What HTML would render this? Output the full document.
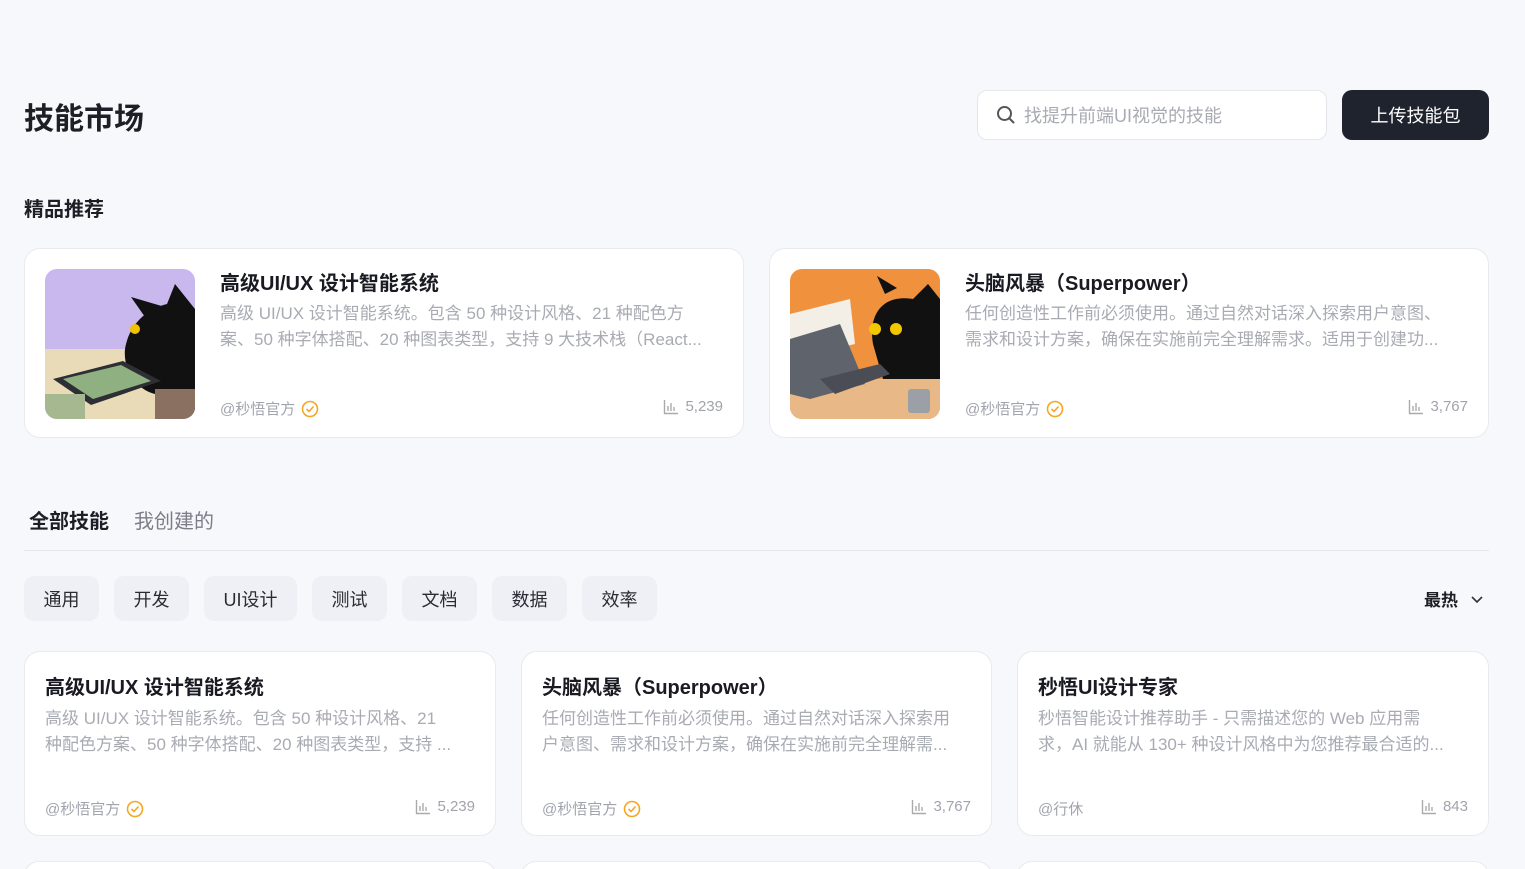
<!DOCTYPE html>
<html style="width:1525px;height:869px;overflow:hidden"><head><meta charset="utf-8"><style>
*{box-sizing:border-box;margin:0;padding:0}
body{width:1525px;height:869px;overflow:hidden;background:#f7f8fc;font-family:"Liberation Sans","Noto Sans CJK SC",sans-serif;position:relative;color:#1d1f26}
.a{position:absolute}
.card{position:absolute;background:#fff;border:1px solid #e9eaef;border-radius:16px}
.t{font-size:20px;font-weight:700;color:#1a1b22;white-space:nowrap}
.d{font-size:17px;color:#a9abb3;line-height:26px}
.m{font-size:15px;color:#a2a4ad;display:flex;align-items:center;gap:6px}
.chip{position:absolute;top:576px;height:45px;background:#eff0f5;border-radius:10px;font-size:18px;color:#2a2c33;display:flex;align-items:center;justify-content:center}
</style></head><body>
<div class="a" style="left:24px;top:94px;font-size:30px;font-weight:700">技能市场</div>
<div class="a" style="left:977px;top:90px;width:350px;height:50px;background:#fff;border:1px solid #e6e7ec;border-radius:10px;display:flex;align-items:center;padding-left:18px;gap:8px;font-size:18px;color:#a9abb2">
<svg width="20" height="20" viewBox="0 0 20 20"><circle cx="8.5" cy="8.5" r="6.5" fill="none" stroke="#555" stroke-width="2"/><path d="M13 13l4.5 4.5" stroke="#555" stroke-width="2" stroke-linecap="round"/></svg>找提升前端UI视觉的技能</div>
<div class="a" style="left:1342px;top:90px;width:147px;height:50px;background:#1f232d;border-radius:10px;color:#fff;font-size:18px;display:flex;align-items:center;justify-content:center">上传技能包</div>
<div class="a" style="left:24px;top:193px;font-size:20px;font-weight:700">精品推荐</div>

<div class="card" style="left:24px;top:248px;width:720px;height:190px">
<svg class="a" style="left:20px;top:20px;border-radius:12px" width="150" height="150" viewBox="0 0 150 150"><rect width="150" height="150" fill="#c9b8ee"/><rect y="80" width="150" height="70" fill="#eadbb8"/><path d="M150 150V40l-20-25-8 20c-20 5-38 20-42 45-2 20 10 40 30 45z" fill="#111"/><path d="M86 28l14 20 20-10z" fill="#111"/><circle cx="90" cy="60" r="5" fill="#f2c100"/><path d="M8 110l70-18 38 20-70 24z" fill="#2d2f35"/><path d="M18 110l58-14 30 16-58 18z" fill="#8fb080"/><rect x="110" y="120" width="40" height="30" fill="#8a7060"/><rect x="0" y="125" width="40" height="25" fill="#a5b890"/></svg>
<div class="a t" style="left:195px;top:18px">高级UI/UX 设计智能系统</div>
<div class="a d" style="left:195px;top:52px;width:490px">高级 UI/UX 设计智能系统。包含 50 种设计风格、21 种配色方案、50 种字体搭配、20 种图表类型，支持 9 大技术栈（React...</div>
<div class="a m" style="left:195px;top:149px">@秒悟官方 <svg width="18" height="18" viewBox="0 0 18 18"><circle cx="9" cy="9" r="7.5" fill="none" stroke="#f5a623" stroke-width="1.6"/><path d="M5.5 9l2.5 2.5 4.5-5" fill="none" stroke="#f5a623" stroke-width="1.6"/></svg></div>
<div class="a m" style="right:20px;top:149px"><svg width="16" height="16" viewBox="0 0 16 16"><path d="M1.5 1v13.5H15M5 12V7M8 12V4M11 12V8" stroke="#aaa" stroke-width="1.4" fill="none"/></svg>5,239</div>
</div>

<div class="card" style="left:769px;top:248px;width:720px;height:190px">
<svg class="a" style="left:20px;top:20px;border-radius:12px" width="150" height="150" viewBox="0 0 150 150"><rect width="150" height="150" fill="#f0913e"/><rect y="110" width="150" height="40" fill="#e9b887"/><path d="M0 45l60-15 5 45-65 15z" fill="#f3efe6"/><path d="M150 110V30l-12-15-15 15c-30-5-45 15-40 45l10 35z" fill="#111"/><path d="M95 25l-8-18 20 12z" fill="#111"/><circle cx="85" cy="60" r="6" fill="#f2c800"/><circle cx="106" cy="60" r="6" fill="#f2c800"/><path d="M0 70l50-15 25 60-55 15-20-5z" fill="#5f636c"/><path d="M30 110l60-15 10 10-55 20z" fill="#4a4d55"/><rect x="118" y="120" width="22" height="24" rx="3" fill="#9aa0a6"/></svg>
<div class="a t" style="left:195px;top:18px">头脑风暴（Superpower）</div>
<div class="a d" style="left:195px;top:52px;width:490px">任何创造性工作前必须使用。通过自然对话深入探索用户意图、需求和设计方案，确保在实施前完全理解需求。适用于创建功...</div>
<div class="a m" style="left:195px;top:149px">@秒悟官方 <svg width="18" height="18" viewBox="0 0 18 18"><circle cx="9" cy="9" r="7.5" fill="none" stroke="#f5a623" stroke-width="1.6"/><path d="M5.5 9l2.5 2.5 4.5-5" fill="none" stroke="#f5a623" stroke-width="1.6"/></svg></div>
<div class="a m" style="right:20px;top:149px"><svg width="16" height="16" viewBox="0 0 16 16"><path d="M1.5 1v13.5H15M5 12V7M8 12V4M11 12V8" stroke="#aaa" stroke-width="1.4" fill="none"/></svg>3,767</div>
</div>

<div class="a" style="left:29px;top:505px;font-size:20px;font-weight:700">全部技能</div>
<div class="a" style="left:134px;top:505px;font-size:20px;color:#7b7e88">我创建的</div>
<div class="a" style="left:24px;top:550px;width:1465px;height:1px;background:#e5e6eb"></div>
<div class="chip" style="left:24px;width:75px">通用</div>
<div class="chip" style="left:114px;width:75px">开发</div>
<div class="chip" style="left:204px;width:93px">UI设计</div>
<div class="chip" style="left:312px;width:75px">测试</div>
<div class="chip" style="left:402px;width:75px">文档</div>
<div class="chip" style="left:492px;width:75px">数据</div>
<div class="chip" style="left:582px;width:75px">效率</div>
<div class="a" style="left:1424px;top:586px;font-size:17px;font-weight:700;display:flex;align-items:center;gap:12px">最热<svg width="14" height="14" viewBox="0 0 14 14"><path d="M2 5l5 5 5-5" fill="none" stroke="#333" stroke-width="1.6"/></svg></div>

<div class="card" style="left:24px;top:651px;width:472px;height:185px">
<div class="a t" style="left:20px;top:19px">高级UI/UX 设计智能系统</div>
<div class="a d" style="left:20px;top:54px;width:408px">高级 UI/UX 设计智能系统。包含 50 种设计风格、21 种配色方案、50 种字体搭配、20 种图表类型，支持 ...</div>
<div class="a m" style="left:20px;top:146px">@秒悟官方 <svg width="18" height="18" viewBox="0 0 18 18"><circle cx="9" cy="9" r="7.5" fill="none" stroke="#f5a623" stroke-width="1.6"/><path d="M5.5 9l2.5 2.5 4.5-5" fill="none" stroke="#f5a623" stroke-width="1.6"/></svg></div>
<div class="a m" style="right:20px;top:146px"><svg width="16" height="16" viewBox="0 0 16 16"><path d="M1.5 1v13.5H15M5 12V7M8 12V4M11 12V8" stroke="#aaa" stroke-width="1.4" fill="none"/></svg>5,239</div>
</div>
<div class="card" style="left:521px;top:651px;width:471px;height:185px">
<div class="a t" style="left:20px;top:19px">头脑风暴（Superpower）</div>
<div class="a d" style="left:20px;top:54px;width:415px">任何创造性工作前必须使用。通过自然对话深入探索用户意图、需求和设计方案，确保在实施前完全理解需...</div>
<div class="a m" style="left:20px;top:146px">@秒悟官方 <svg width="18" height="18" viewBox="0 0 18 18"><circle cx="9" cy="9" r="7.5" fill="none" stroke="#f5a623" stroke-width="1.6"/><path d="M5.5 9l2.5 2.5 4.5-5" fill="none" stroke="#f5a623" stroke-width="1.6"/></svg></div>
<div class="a m" style="right:20px;top:146px"><svg width="16" height="16" viewBox="0 0 16 16"><path d="M1.5 1v13.5H15M5 12V7M8 12V4M11 12V8" stroke="#aaa" stroke-width="1.4" fill="none"/></svg>3,767</div>
</div>
<div class="card" style="left:1017px;top:651px;width:472px;height:185px">
<div class="a t" style="left:20px;top:19px">秒悟UI设计专家</div>
<div class="a d" style="left:20px;top:54px;width:412px">秒悟智能设计推荐助手 - 只需描述您的 Web 应用需求，AI 就能从 130+ 种设计风格中为您推荐最合适的...</div>
<div class="a m" style="left:20px;top:146px">@行休</div>
<div class="a m" style="right:20px;top:146px"><svg width="16" height="16" viewBox="0 0 16 16"><path d="M1.5 1v13.5H15M5 12V7M8 12V4M11 12V8" stroke="#aaa" stroke-width="1.4" fill="none"/></svg>843</div>
</div>
<div class="a" style="left:24px;top:861px;width:1465px;height:8px;overflow:hidden">
<div class="card" style="left:0;top:0;width:472px;height:30px"></div>
<div class="card" style="left:497px;top:0;width:471px;height:30px"></div>
<div class="card" style="left:993px;top:0;width:472px;height:30px"></div>
</div>
</body></html>
